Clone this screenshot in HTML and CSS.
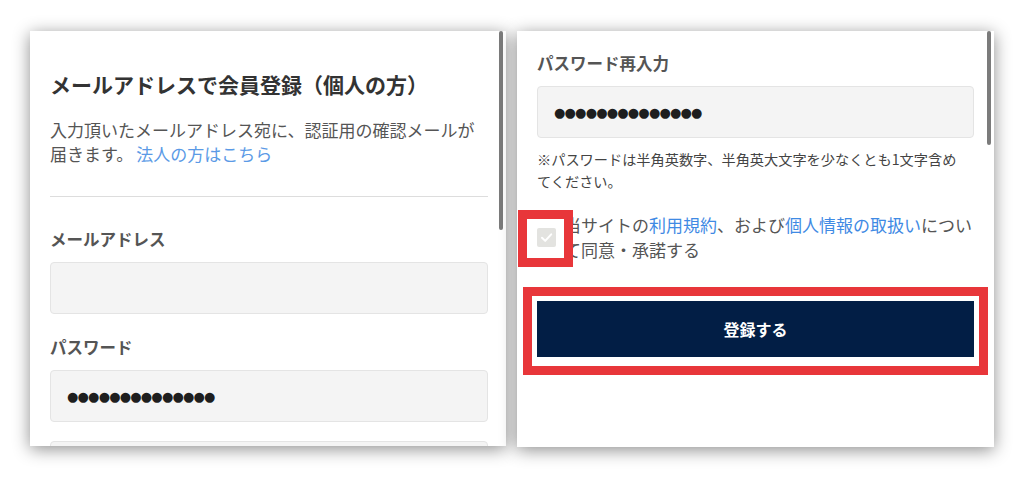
FILE: index.html
```html
<!DOCTYPE html>
<html lang="ja">
<head>
  <meta charset="UTF-8" />
  <meta name="viewport" content="width=device-width, initial-scale=1.0" />
  <title>メールアドレスで会員登録</title>
  <link rel="stylesheet" href="styles.css">
</head>
<body>
  <div class="screens">
    <div class="screen screen-left">
      <div class="scrollbar bar-left"></div>
      <h2 class="title">メールアドレスで会員登録（個人の方）</h2>
      <p class="lead">入力頂いたメールアドレス宛に、認証用の確認メールが届きます。<a href="#">法人の方はこちら</a></p>
      <hr class="divider">
      <div class="field">
        <label>メールアドレス</label>
        <div class="input"></div>
      </div>
      <div class="field">
        <label>パスワード</label>
        <div class="input"><span class="dots">●●●●●●●●●●●●●●</span></div>
      </div>
      <div class="input next"></div>
    </div>

    <div class="screen screen-right">
      <div class="scrollbar bar-right"></div>
      <div class="field first">
        <label>パスワード再入力</label>
        <div class="input"><span class="dots">●●●●●●●●●●●●●●</span></div>
      </div>
      <p class="note">※パスワードは半角英数字、半角英大文字を少なくとも1文字含め<br>てください。</p>
      <div class="agree">
        <svg class="check" width="19" height="19" viewBox="0 0 19 19">
          <rect width="19" height="19" rx="2" fill="#e3e3e0" />
          <path d="M5 9.8l3.2 3.1 6-6.6" stroke="#fff" stroke-width="2" fill="none" stroke-linecap="round" stroke-linejoin="round" />
        </svg>
        <p>当サイトの<a href="#">利用規約</a>、および<a href="#">個人情報の取扱い</a>について同意・承諾する</p>
      </div>
      <button class="submit">登録する</button>
    </div>
  </div>

  <!-- 注目ポイントの赤枠 -->
  <div class="mark mark-check"></div>
  <div class="mark mark-button"></div>
</body>
</html>
```

FILE: styles.css
```css
body {
  margin: 0;
  background: #ffffff;
  font-family: "Noto Sans CJK JP", sans-serif;
  color: #555;
  position: relative;
  height: 477px;
  overflow: hidden;
}
.screens {
  display: flex;
  gap: 11px;
  padding: 31px 0 0 30px;
}
.screen {
  position: relative;
  background: #ffffff;
  overflow: hidden;
  box-sizing: border-box;
  box-shadow: 0 3px 16px rgba(0, 0, 0, 0.45);
}
.screen-left {
  width: 476px;
  height: 415px;
  padding: 38px 18px 0 20px;
}
.screen-right {
  width: 477px;
  height: 416px;
  padding: 20px 20px 0 20px;
}
.scrollbar {
  position: absolute;
  top: 0;
  right: 3px;
  width: 4px;
  background: #7b7b7b;
  border-radius: 2px;
}
.bar-left {
  height: 199px;
}
.bar-right {
  height: 114px;
}
.title {
  margin: 0;
  font-size: 21px;
  line-height: 30px;
  font-weight: 700;
  color: #333;
}
.lead {
  margin: 19px 0 0;
  font-size: 17px;
  line-height: 24px;
  color: #555;
}
.lead a {
  color: #5b9ae6;
  text-decoration: none;
  margin-left: 3px;
}
.divider {
  margin: 30px 0 30px;
  border: 0;
  border-top: 1px solid #dddddd;
  height: 0;
}
.field {
  margin-top: 21px;
}
.field.first {
  margin-top: 0;
}
.field label {
  display: block;
  font-size: 16.5px;
  line-height: 24px;
  font-weight: 700;
  color: #555;
  margin-bottom: 11px;
}
.input {
  height: 52px;
  box-sizing: border-box;
  background: #f4f4f4;
  border: 1px solid #e4e4e4;
  border-radius: 4px;
  padding-left: 16px;
  display: flex;
  align-items: center;
}
.input.next {
  margin-top: 19px;
}
.dots {
  font-family: "DejaVu Sans", sans-serif;
  font-size: 13px;
  color: #1e1e1e;
  letter-spacing: -0.8px;
}
.note {
  margin: 10px 0 0;
  font-size: 14.2px;
  line-height: 22px;
  color: #444;
}
.agree {
  margin-top: 20px;
  display: flex;
  align-items: center;
  gap: 8px;
}
.agree .check {
  flex: none;
}
.agree p {
  margin: 0;
  font-size: 17px;
  line-height: 25px;
  color: #555;
}
.agree a {
  color: #3f8ae4;
  text-decoration: none;
}
.submit {
  display: block;
  width: 100%;
  height: 56px;
  margin-top: 39px;
  border: none;
  background: #021e45;
  color: #ffffff;
  font-family: "Noto Sans CJK JP", sans-serif;
  font-size: 16px;
  font-weight: 700;
}
.mark {
  position: absolute;
  border: 9px solid #e8363a;
  box-sizing: border-box;
}
.mark-check {
  left: 518px;
  top: 210px;
  width: 55px;
  height: 57px;
}
.mark-button {
  left: 523px;
  top: 287px;
  width: 465px;
  height: 88px;
}
```
